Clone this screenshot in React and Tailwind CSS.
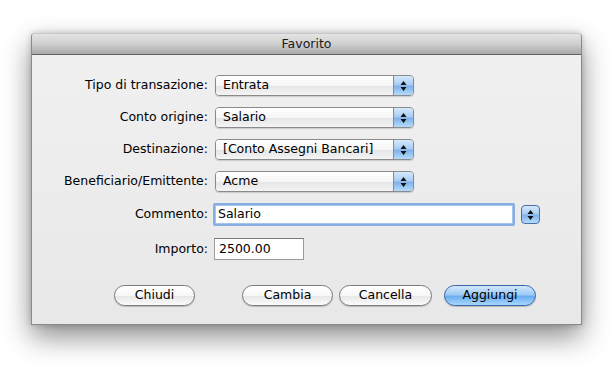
import React from "react";

const font = { fontFamily: '"DejaVu Sans", "Lucida Grande", sans-serif' };

function Arrows({ className = "" }) {
  return (
    <svg width="7" height="12" viewBox="0 0 7 12" className={className}>
      <path d="M3.5 1 L6.5 5 L0.5 5 Z" fill="#111" />
      <path d="M3.5 11 L6.5 7 L0.5 7 Z" fill="#111" />
    </svg>
  );
}

function Popup({ value }) {
  return (
    <div className="flex h-[21px] w-[199px] overflow-hidden rounded-[4px] border border-[#8a8a8a] shadow-[0_1px_1px_rgba(0,0,0,0.15)]">
      <div className="flex flex-1 items-center bg-[linear-gradient(to_bottom,#ffffff_0%,#f6f6f6_50%,#e6e6e6_55%,#f4f4f4_100%)] pl-[7px] text-[12.5px] text-black">
        {value}
      </div>
      <div className="flex w-[20px] items-center justify-center border-l border-[#6f8fc0] bg-[linear-gradient(to_bottom,#d6e8fb_0%,#a9cdf3_45%,#7fb3ec_55%,#b5dbfb_100%)]">
        <Arrows />
      </div>
    </div>
  );
}

function Button({ children, w, primary }) {
  return (
    <div
      className={
        "flex h-[21px] items-center justify-center rounded-full border text-[12.5px] text-black shadow-[0_1px_1px_rgba(0,0,0,0.2)] " +
        (primary
          ? "border-[#3a64a8] bg-[linear-gradient(to_bottom,#d3e7fb_0%,#9fcaf4_45%,#6aaeef_55%,#a8d7fc_100%)]"
          : "border-[#7b7b7b] bg-[linear-gradient(to_bottom,#ffffff_0%,#f7f7f7_50%,#e8e8e8_55%,#fbfbfb_100%)]") +
        " " + w
      }
    >
      {children}
    </div>
  );
}

function Label({ children }) {
  return (
    <div className="w-[177px] shrink-0 pr-[1px] text-right text-[12.5px] text-black">{children}</div>
  );
}

export default function App() {
  return (
    <div className="h-[387px] w-[615px] bg-white pl-[31px] pt-[33px]" style={font}>
      <div className="flex h-[292px] w-[551px] flex-col overflow-hidden rounded-t-[4px] border border-[#8a8a8a] border-t-[#c8c8c8] bg-[#ececec] shadow-[0_12px_28px_rgba(0,0,0,0.45),0_0_6px_rgba(0,0,0,0.2)]">
        <div className="flex h-[21px] shrink-0 items-center justify-center border-b border-[#606060] bg-[linear-gradient(to_bottom,#e4e4e4_0%,#cfcfcf_50%,#a9a9a9_100%)] text-[12.5px] text-[#1a1a1a]">
          Favorito
        </div>
        <div className="flex flex-1 flex-col bg-[linear-gradient(to_bottom,#f0f0f0_0%,#e8e8e8_100%)] pt-[20px]">
          {[
            ["Tipo di transazione:", "Entrata"],
            ["Conto origine:", "Salario"],
            ["Destinazione:", "[Conto Assegni Bancari]"],
            ["Beneficiario/Emittente:", "Acme"],
          ].map(([l, v]) => (
            <div key={l} className="mb-[11px] flex h-[21px] items-center gap-[6px]">
              <Label>{l}</Label>
              <Popup value={v} />
            </div>
          ))}
          <div className="mb-[12px] flex h-[23px] items-center gap-[4px]">
            <Label>Commento:</Label>
            <div className="flex h-[23px] w-[302px] items-center rounded-[2px] border-[2px] border-[#86aee0] bg-white pl-[3px] text-[12.5px] text-black shadow-[inset_0_0_0_1px_#a6c4ea]">
              Salario
            </div>
            <div className="ml-[2px] flex h-[19px] w-[19px] items-center justify-center rounded-[4px] border border-[#4a6ea8] bg-[linear-gradient(to_bottom,#d6e8fb_0%,#a9cdf3_45%,#7fb3ec_55%,#b5dbfb_100%)]">
              <Arrows />
            </div>
          </div>
          <div className="flex h-[22px] items-center gap-[5px]">
            <Label>Importo:</Label>
            <div className="flex h-[22px] w-[90px] items-center border border-[#9a9a9a] border-t-[#7a7a7a] bg-white pl-[4px] text-[12.5px] text-black">
              2500.00
            </div>
          </div>
          <div className="mt-[25px] flex h-[21px] items-center pl-[82px]">
            <Button w="w-[81px]">Chiudi</Button>
            <div className="ml-[47px]">
              <Button w="w-[91px]">Cambia</Button>
            </div>
            <div className="ml-[6px]">
              <Button w="w-[93px]">Cancella</Button>
            </div>
            <div className="ml-[12px]">
              <Button w="w-[92px]" primary>Aggiungi</Button>
            </div>
          </div>
        </div>
      </div>
    </div>
  );
}
